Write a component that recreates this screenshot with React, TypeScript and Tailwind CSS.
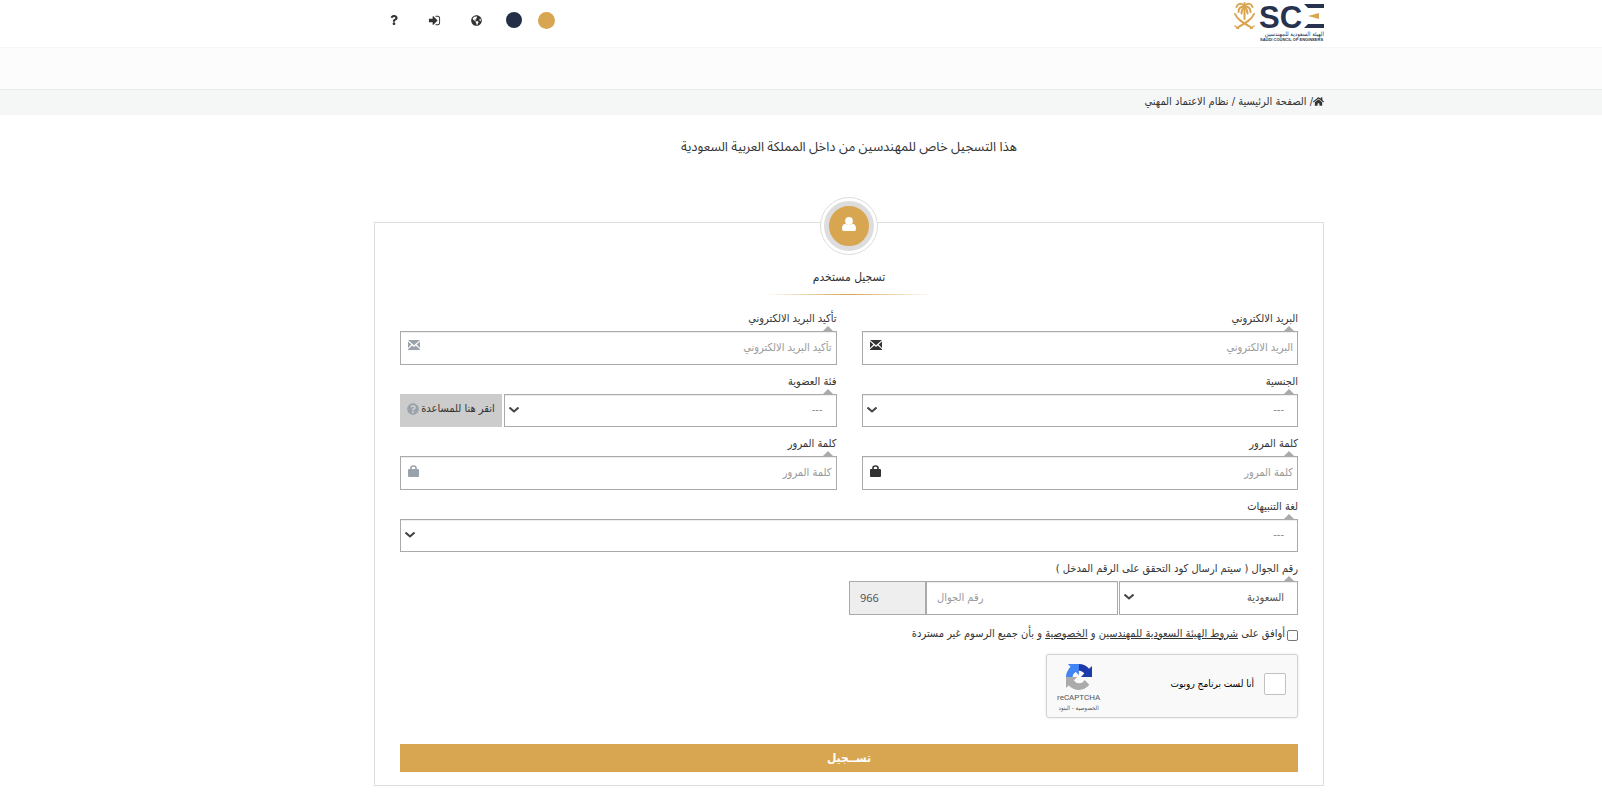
import React from "react";
import { FaGlobeAmericas, FaHome, FaQuestion, FaQuestionCircle } from "react-icons/fa";

const controlClass =
  "block w-full border border-[#aaa] bg-white text-[11px] text-[#555] rounded-none outline-none placeholder:text-[#999] placeholder:opacity-100 shadow-[inset_0_1px_1px_rgba(0,0,0,0.075)]";

function Logo() {
  return (
    <svg viewBox="0 0 91 42" className="w-[91px] h-[42px]" role="img" aria-label="SCE">
      {/* Palm and crossed swords */}
      <g fill="none" stroke="#d9a550" strokeLinecap="round">
        <path d="M11.5 19V6" strokeWidth="2" />
        <path d="M11.5 6C8 2 4.5 4 3.5 7M11.5 6C15 2 18.5 4 19.5 7" strokeWidth="2" />
        <path d="M11.5 7C8 6 5.5 8 5.5 12M11.5 7C15 6 17.5 8 17.5 12" strokeWidth="2" />
        <path d="M11.5 7C9.5 8.5 8.5 10.5 8.5 13.500M11.5 7C13.5 8.5 14.5 10.5 14.5 13.500" strokeWidth="2" />
        <path d="M11.5 6V3" strokeWidth="2" />
        <path d="M2 14C4 19 9 22 19 28" strokeWidth="2" />
        <path d="M21 14C19 19 14 22 4 28" strokeWidth="2" />
        <path d="M2 26L5.500 28.500M21 26L17.500 28.500" strokeWidth="1.500" />
      </g>
      <text x="26" y="28" direction="ltr" fill="#27324f" fontFamily="'Liberation Sans', sans-serif" fontWeight="700" fontSize="31">
        SC
      </text>
      <path d="M71 4h20v4H75zM75 24h16v4H71z" fill="#27324f" />
      <path d="M75 16l11-3v6z" fill="#d9a550" />
      <text x="91" y="36" direction="rtl" fill="#27324f" fontFamily="'DejaVu Sans Condensed', sans-serif" fontSize="6">
        الهيئة السعودية للمهندسين
      </text>
      <text x="27" y="41" direction="ltr" fill="#27324f" fontFamily="'Liberation Sans', sans-serif" fontWeight="700" fontSize="4">
        SAUDI COUNCIL OF ENGINEERS
      </text>
    </svg>
  );
}

function SignInIcon() {
  return (
    <svg viewBox="0 0 1792 1792" className="w-[13px] h-[13px]" fill="currentColor" aria-hidden="true">
      <path d="M1312 896q0 26-19 45l-544 544q-19 19-45 19t-45-19-19-45v-288h-448q-26 0-45-19t-19-45v-384q0-26 19-45t45-19h448v-288q0-26 19-45t45-19 45 19l544 544q19 19 19 45zm352-352v704q0 119-84.5 203.5t-203.5 84.5h-320q-13 0-22.5-9.500t-9.500-22.500q0-4-1-20t-.5-26.500 3-23.500 10-19.500 20.500-6.500h320q66 0 113-47t47-113v-704q0-66-47-113t-113-47h-312l-11.500-1-11.500-3-8-5.500-7-9-2-13.500q0-4-1-20t-.5-26.500 3-23.500 10-19.500 20.500-6.500h320q119 0 203.500 84.500t84.500 203.500z" />
    </svg>
  );
}

function EnvelopeIcon() {
  return (
    <svg viewBox="0 0 12 10" className="w-3 h-[10px]" fill="currentColor" aria-hidden="true">
      <path d="M0 0h12L6 5.200zM0 1.500L3.400 4.600 0 8zM12 1.500L8.600 4.600 12 8zM4.300 5.400L6 7l1.700-1.600L12 9.300V10H0v-.7z" />
    </svg>
  );
}

function LockIcon() {
  return (
    <svg viewBox="0 0 11 12" className="w-[11px] h-3" aria-hidden="true">
      <path d="M3 5V3a2.500 2 0 0 1 5 0v2" fill="none" stroke="currentColor" strokeWidth="1.600" />
      <rect x="0" y="4" width="11" height="8" rx="1" fill="currentColor" />
    </svg>
  );
}

function RecaptchaLogo() {
  return (
    <svg viewBox="0 0 64 64" className="w-[26px] h-[26px]" aria-hidden="true">
      <path fill="#1c3aa9" d="M64 31.955l-.033-1.370V4.687l-7.160 7.160C50.948 4.674 42.033.093 32.050.093c-10.400 0-19.622 4.960-25.458 12.640l11.736 11.860a15.550 15.550 0 0 1 4.754-5.334c2.050-1.600 4.952-2.906 8.968-2.906.485 0 .860.057 1.135.163 4.976.393 9.288 3.140 11.828 7.124l-8.307 8.307L64 31.953" />
      <path fill="#4285f4" d="M31.862.094l-1.370.033H4.594l7.160 7.160C4.580 13.147 0 22.060 0 32.046c0 10.400 4.960 19.622 12.640 25.458L24.500 45.768a15.550 15.550 0 0 1-5.334-4.754c-1.600-2.050-2.906-4.952-2.906-8.968 0-.485.057-.860.163-1.135.393-4.976 3.140-9.288 7.124-11.828l8.307 8.307L31.860.095" />
      <path fill="#ababab" d="M.001 32.045l.033 1.370v25.898l7.160-7.160c5.860 7.173 14.774 11.754 24.760 11.754 10.400 0 19.622-4.960 25.458-12.640l-11.736-11.860a15.550 15.550 0 0 1-4.754 5.334c-2.050 1.600-4.952 2.906-8.968 2.906-.485 0-.860-.057-1.135-.163-4.976-.393-9.288-3.140-11.828-7.124l8.307-8.307c-10.522.040-22.400.066-27.295-.005" />
    </svg>
  );
}

interface FieldLabelProps {
  htmlFor: string;
  children: React.ReactNode;
}

function FieldLabel({ htmlFor, children }: FieldLabelProps) {
  return (
    <label htmlFor={htmlFor} className="relative block h-[29px] pt-[7px] text-[11px] leading-5">
      {children}
      <span className="absolute bottom-0 right-1 border-x-5 border-b-5 border-x-transparent border-b-[#aaa]" />
    </label>
  );
}

interface TextFieldProps {
  id: string;
  label: string;
  type: string;
  icon: React.ReactNode;
  muted?: boolean;
}

function TextField({ id, label, type, icon, muted }: TextFieldProps) {
  return (
    <div>
      <FieldLabel htmlFor={id}>{label}</FieldLabel>
      <div className="relative">
        <input id={id} type={type} placeholder={label} dir="rtl" className={`${controlClass} h-[34px] pr-1 pl-8 pb-0.5`} />
        <span className={`absolute left-2 top-[9px] ${muted ? "text-[#9aa3ab]" : "text-[#333]"}`}>{icon}</span>
      </div>
    </div>
  );
}

interface SelectBoxProps {
  id: string;
  value: string;
  tall?: boolean;
}

function SelectBox({ id, value, tall }: SelectBoxProps) {
  return (
    <div className="relative flex-1">
      <select id={id} className={`${controlClass} appearance-none pr-[13px] pl-7 ${tall ? "h-[34px]" : "h-[33px] text-[#888]"}`}>
        <option>{value}</option>
      </select>
      <svg viewBox="0 0 10 6" className="pointer-events-none absolute left-[5px] top-[13px] w-[10px] h-1.5" fill="none" aria-hidden="true">
        <path d="M0.500 0.500L5 4.500L9.500 0.500" stroke="#444" strokeWidth="2" />
      </svg>
    </div>
  );
}

export default function App() {
  return (
    <div dir="rtl" className="bg-white text-[#333] font-['DejaVu_Sans_Condensed','DejaVu_Sans',sans-serif]">
      <header className="h-12 border-b border-[#f5f5f5]">
        <div className="mx-auto max-w-[1046px] pl-24 flex justify-between">
          <a href="#home" className="block">
            <Logo />
          </a>
          <div dir="ltr" className="flex items-center h-10">
            <a href="#help" aria-label="مساعدة" className="w-10 flex justify-center">
              <FaQuestion className="w-[10px] h-[10px]" />
            </a>
            <a href="#login" aria-label="دخول" className="w-10 flex justify-center">
              <SignInIcon />
            </a>
            <a href="#language" aria-label="اللغة" className="w-11 flex justify-center">
              <FaGlobeAmericas className="w-[11px] h-[11px]" />
            </a>
            <div className="flex gap-4 pl-2">
              <button type="button" aria-label="كحلي" className="size-4 rounded-full bg-[#222f46]" />
              <button type="button" aria-label="ذهبي" className="size-[17px] rounded-full bg-[#d8a551]" />
            </div>
          </div>
        </div>
      </header>

      <nav className="h-[42px] bg-[#fcfcfc] border-b border-[#ebebeb]" />

      <div className="h-[25px] bg-[#f5f7f7]">
        <div className="mx-auto max-w-[1046px] pl-24 h-[23px] flex items-center text-[11px] leading-5">
          <a href="#home" aria-label="الرئيسية">
            <FaHome className="w-[11px] h-[11px]" />
          </a>
          <span>/&nbsp;</span>
          <a href="#home">الصفحة الرئيسية</a>
          <span>&nbsp;/&nbsp;</span>
          <span>نظام الاعتماد المهني</span>
        </div>
      </div>

      <main className="mx-auto max-w-[1046px] pl-24 pb-3">
        <p className="pt-5 pb-[63px] text-center text-[13px] leading-6 font-['Noto_Sans_Arabic','DejaVu_Sans',sans-serif]">
          هذا التسجيل خاص للمهندسين من داخل المملكة العربية السعودية
        </p>

        <form className="border border-[#ddd] px-[25px] pb-[13px]" onSubmit={(e) => e.preventDefault()}>
          <div className="-mt-[26px] flex flex-col items-center">
            <div className="size-[58px] rounded-full border border-[#ddd] bg-white p-[3px]">
              <div className="size-full rounded-full border-5 border-[#ddd] bg-[#d8a551] flex justify-center pt-[11px]">
                <svg viewBox="0 0 14 14" className="size-[14px]" fill="#fff" aria-hidden="true">
                  <circle cx="7" cy="4" r="3.900" />
                  <path d="M3.500 6.700C5.500 8.500 8.500 8.500 10.500 6.700C13 6.700 14 9 14 11.500Q14 14 12.500 14H1.500Q0 14 0 11.500C0 9 1 6.700 3.500 6.700z" />
                </svg>
              </div>
            </div>
            <h1 className="mt-3 text-xs leading-5">تسجيل مستخدم</h1>
            <div className="mt-[7px] mb-[7px] h-px w-42 bg-linear-to-r from-transparent via-[#d8a551] to-transparent" />
          </div>

          <div className="grid grid-cols-2 gap-x-[25px]">
            <TextField id="email" label="البريد الالكتروني" type="email" icon={<EnvelopeIcon />} />
            <TextField id="confirm-email" label="تأكيد البريد الالكتروني" type="email" icon={<EnvelopeIcon />} muted />

            <div>
              <FieldLabel htmlFor="nationality">الجنسية</FieldLabel>
              <SelectBox id="nationality" value="---" />
            </div>
            <div>
              <FieldLabel htmlFor="membership">فئة العضوية</FieldLabel>
              <div className="flex gap-0.5">
                <SelectBox id="membership" value="---" />
                <button type="button" className="h-[33px] w-[102px] bg-[#ccc] pb-1 flex items-center justify-center gap-0.5 text-[11px] leading-5">
                  انقر هنا للمساعدة
                  <FaQuestionCircle className="size-3 shrink-0 text-[#9aa3ab]" />
                </button>
              </div>
            </div>

            <TextField id="password" label="كلمة المرور" type="password" icon={<LockIcon />} />
            <TextField id="confirm-password" label="كلمة المرور" type="password" icon={<LockIcon />} muted />

            <div className="col-span-2">
              <FieldLabel htmlFor="language">لغة التنبيهات</FieldLabel>
              <SelectBox id="language" value="---" />
            </div>
          </div>

          <FieldLabel htmlFor="mobile">رقم الجوال ( سيتم ارسال كود التحقق على الرقم المدخل )</FieldLabel>
          <div className="flex">
            <div className="flex w-[179px] ml-px">
              <SelectBox id="country" value="السعودية" tall />
            </div>
            <div className="w-48">
              <input id="mobile" type="tel" placeholder="رقم الجوال" dir="ltr" className={`${controlClass} h-[34px] px-[10px] pb-0.5 text-left`} />
            </div>
            <div className="w-[77px]">
              <input type="text" aria-label="مفتاح الدولة" defaultValue="966" readOnly dir="ltr" className="block w-full h-[34px] border border-[#aaa] bg-[#eee] px-[10px] pb-0.5 text-[11px] text-[#555] outline-none font-['Noto_Sans',sans-serif]" />
            </div>
          </div>

          <div className="h-[39px] pb-0.5 flex items-center gap-0.5 text-[11px] leading-5">
            <input id="terms" type="checkbox" className="mt-1 size-[11px] appearance-none rounded-xs border border-[#767676] bg-white" />
            <label htmlFor="terms">
              أوافق على <a href="#terms" className="underline">شروط الهيئة السعودية للمهندسين</a> و{" "}
              <a href="#privacy" className="underline">الخصوصية</a> و بأن جميع الرسوم غير مستردة
            </label>
          </div>

          {/* Captcha */}
          <div className="w-[252px] h-16 flex items-center justify-between rounded-[3px] border border-[#d3d3d3] bg-[#f9f9f9] pr-[11px] pl-[10px] shadow-[0_0_3px_rgba(0,0,0,0.1)]">
            <div className="flex items-center gap-[10px] pb-1">
              <input id="robot" type="checkbox" className="size-[22px] appearance-none rounded-xs border border-[#c1c1c1] bg-white" />
              <label htmlFor="robot" className="text-[10px] leading-5 text-black">أنا لست برنامج روبوت</label>
            </div>
            <div className="flex flex-col items-center pt-1 text-[#555]">
              <RecaptchaLogo />
              <span className="mt-0.5 text-[8px] leading-3 font-['Roboto',sans-serif]">reCAPTCHA</span>
              <span className="text-[6px] leading-2">
                <a href="#privacy">الخصوصية</a> - <a href="#terms">البنود</a>
              </span>
            </div>
          </div>

          <button type="submit" className="mt-[26px] block w-full h-7 bg-[#d8a551] text-xs leading-7 font-bold text-white">
            تســجيل
          </button>
        </form>
      </main>
    </div>
  );
}
